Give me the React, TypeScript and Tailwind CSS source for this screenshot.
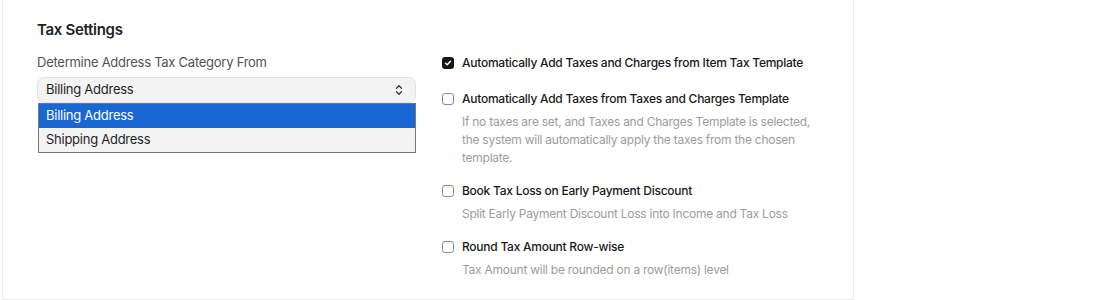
import React from 'react';

type Opt = { label: string; desc?: string[]; checked?: boolean; mt: string };

const options: Opt[] = [
  { label: 'Automatically Add Taxes and Charges from Item Tax Template', checked: true, mt: 'mt-0' },
  {
    label: 'Automatically Add Taxes from Taxes and Charges Template',
    desc: [
      'If no taxes are set, and Taxes and Charges Template is selected,',
      'the system will automatically apply the taxes from the chosen',
      'template.',
    ],
    mt: 'mt-[16px]',
  },
  {
    label: 'Book Tax Loss on Early Payment Discount',
    desc: ['Split Early Payment Discount Loss into Income and Tax Loss'],
    mt: 'mt-[14px]',
  },
  {
    label: 'Round Tax Amount Row-wise',
    desc: ['Tax Amount will be rounded on a row(items) level'],
    mt: 'mt-[14px]',
  },
];

const Checkbox: React.FC<{ checked?: boolean }> = ({ checked }) =>
  checked ? (
    <span className="flex h-[12px] w-[12px] shrink-0 items-center justify-center rounded-[3px] bg-[#171717]">
      <svg width="8" height="8" viewBox="0 0 8 8" fill="none">
        <path d="M1.5 4.2 3.2 5.8 6.5 2.3" stroke="white" strokeWidth="1.4" strokeLinecap="round" strokeLinejoin="round" />
      </svg>
    </span>
  ) : (
    <span className="h-[12px] w-[12px] shrink-0 rounded-[3px] border border-[#8a8a8a] bg-white" />
  );

const App: React.FC = () => {
  return (
    <div className="min-h-[300px] bg-white tracking-[-0.016em]" style={{ fontFamily: 'Inter, "Noto Sans", sans-serif' }}>
      <div className="ml-[2px] w-[852px] border-x border-b border-[#ececec] px-[34px] pt-[18px] pb-[20px]">
        <h2 className="text-[15px] leading-6 font-semibold tracking-[-0.02em] text-[#1f1f1f]">Tax Settings</h2>

        <div className="mt-[10px] grid grid-cols-[379px_1fr] gap-x-[26px]">
          <div>
            <p className="text-[13px] leading-5 text-[#525252]">Determine Address Tax Category From</p>
            <div className="relative mt-[5px]">
              <div className="flex h-[26px] items-center justify-between rounded-[7px] border border-[#e2e2e2] bg-[#f3f3f3] pl-[8px] pr-[12px] text-[13px] text-[#1f1f1f]">
                <span>Billing Address</span>
                <svg width="8" height="12" viewBox="0 0 8 12" fill="none">
                  <path d="M1.5 4.2 4 1.8 6.5 4.2" stroke="#333" strokeWidth="1.3" strokeLinecap="round" strokeLinejoin="round" />
                  <path d="M1.5 7.8 4 10.2 6.5 7.8" stroke="#333" strokeWidth="1.3" strokeLinecap="round" strokeLinejoin="round" />
                </svg>
              </div>
              <div className="absolute top-[26px] left-[1px] w-[378px] border border-[#767676] bg-[#f3f3f3] text-[13px]">
                <div className="flex h-[24px] items-center bg-[#1967d2] pl-[7px] text-white">Billing Address</div>
                <div className="flex h-[24px] items-center pl-[7px] text-[#1f1f1f]">Shipping Address</div>
              </div>
            </div>
          </div>

          <div className="flex flex-col pt-[1px]">
            {options.map((o) => (
              <div key={o.label} className={o.mt}>
                <div className="flex h-[20px] items-center gap-[8px]">
                  <Checkbox checked={o.checked} />
                  <span className="text-[12px] font-medium whitespace-nowrap text-[#1a1a1a]">{o.label}</span>
                </div>
                {o.desc && (
                  <div className="mt-[4px] pl-[20px] text-[12px] leading-[18px] text-[#9c9c9c]">
                    {o.desc.map((d) => (
                      <div key={d} className="whitespace-nowrap">{d}</div>
                    ))}
                  </div>
                )}
              </div>
            ))}
          </div>
        </div>
      </div>
    </div>
  );
};

export default App;
